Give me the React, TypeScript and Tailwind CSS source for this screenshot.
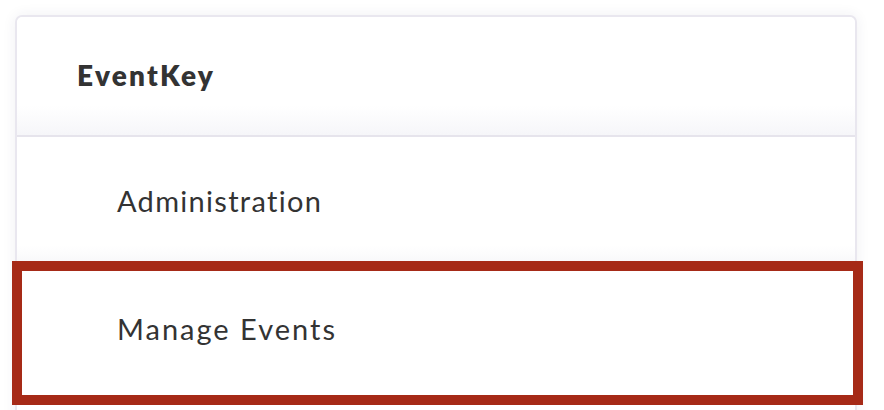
import React from "react";

export default function App() {
  return (
    <div
      className="relative w-[884px] h-[410px] overflow-hidden bg-white"
      style={{ fontFamily: "Lato, 'Open Sans', sans-serif" }}
    >
      <div className="absolute left-[15px] top-[15px] w-[842px] h-[420px] rounded-t-[7px] border-2 border-[#e9e7ef] bg-white shadow-[0_0_14px_rgba(40,40,80,0.07)]">
        <div className="h-[120px] flex items-center pl-[60px] pb-[3px] bg-gradient-to-b from-white via-white via-75% to-[#f6f6f9] border-b-2 border-[#e6e4ec] rounded-t-[6px]">
          <span className="text-[28px] font-extrabold text-[#333333] tracking-[2.2px]">EventKey</span>
        </div>
        <div className="h-[128px] flex items-center pl-[100px] bg-gradient-to-b from-white via-white via-85% to-[#f7f7f9]">
          <span className="text-[29px] text-[#333333] tracking-[1.3px]">Administration</span>
        </div>
        <div className="h-[128px] flex items-center pl-[100px] bg-white">
          <span className="text-[29px] text-[#333333] tracking-[2px]">Manage Events</span>
        </div>
      </div>
      <div className="absolute left-[12px] top-[261px] w-[851px] h-[144px] border-[10px] border-[#a62a17]" />
    </div>
  );
}
